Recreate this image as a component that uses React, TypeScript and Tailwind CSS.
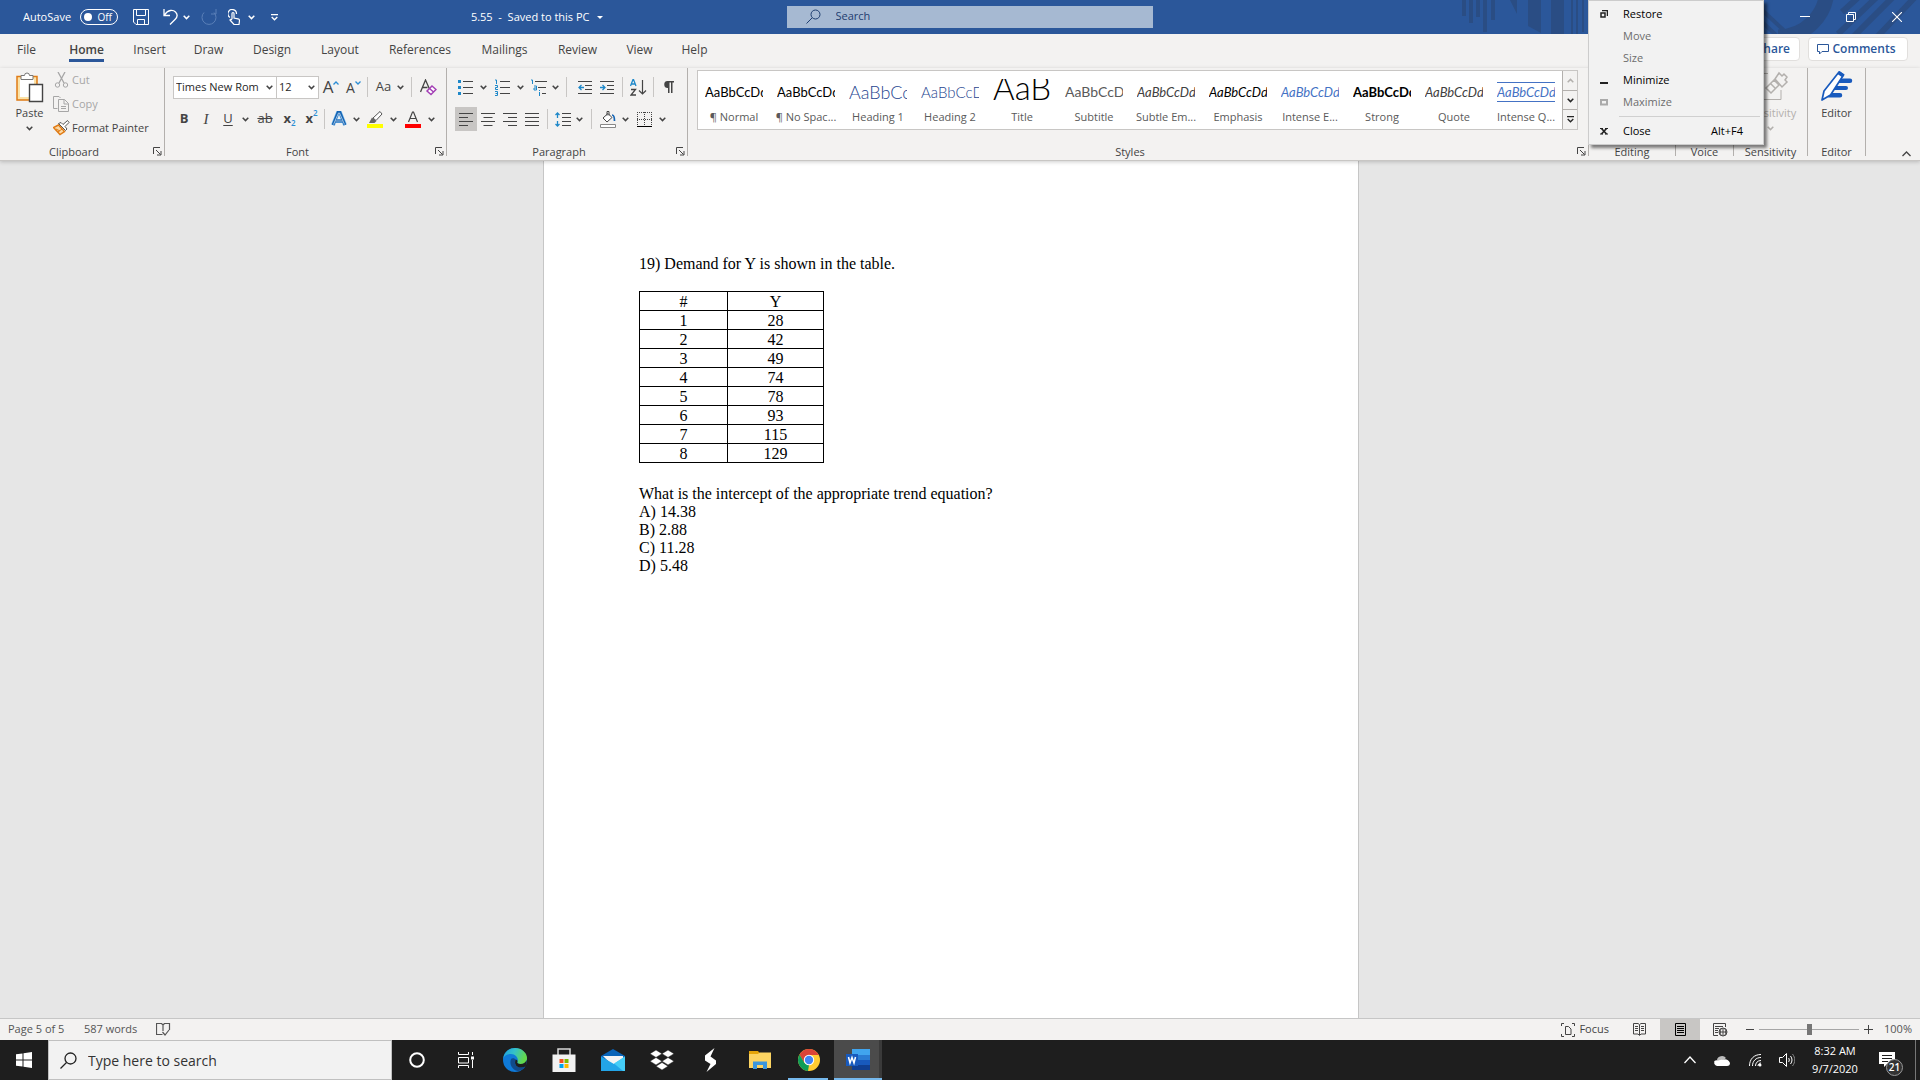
import type { ReactNode } from "react";

interface IconProps {
  w: number;
  h: number;
  children: ReactNode;
  className?: string;
}

function Icon({ w, h, children, className = "" }: IconProps) {
  return (
    <svg width={w} height={h} viewBox={`0 0 ${w} ${h}`} fill="none" stroke="currentColor" className={`shrink-0 ${className}`} aria-hidden="true">
      {children}
    </svg>
  );
}

function Chevron({ className = "" }: { className?: string }) {
  return (
    <Icon w={7} h={5} className={className}>
      <path d="M.7.8 3.5 3.6 6.3.8" strokeWidth="1.5" />
    </Icon>
  );
}

function Tool({ label, width, children, className = "" }: { label: string; width: string; children: ReactNode; className?: string }) {
  return (
    <button aria-label={label} className={`flex h-6 shrink-0 items-center justify-center ${width} ${className}`}>
      {children}
    </button>
  );
}

function Sep({ width }: { width: string }) {
  return (
    <span className={`flex shrink-0 justify-center ${width}`}>
      <span className="h-5 w-px bg-[#c8c6c4]" />
    </span>
  );
}

function Launcher({ label }: { label: string }) {
  return (
    <button aria-label={label} className="absolute right-[2px] bottom-0">
      <Icon w={9} h={9}>
        <path d="M.5 7V.5H7M3 3l4.5 4.5M8 4v4H4" />
      </Icon>
    </button>
  );
}

function Group({ label, width, launcher, children }: { label: string; width: string; launcher?: boolean; children?: ReactNode }) {
  return (
    <section aria-label={label} className={`flex h-[88px] flex-col border-r border-[#b3b0ad] ${width}`}>
      <div className="flex-1">{children}</div>
      <div className={`relative flex h-2 items-center justify-center text-[11px] leading-3 text-[#444] ${launcher ? "pr-4" : ""}`}>
        {label}
        {launcher && <Launcher label={`${label} settings`} />}
      </div>
    </section>
  );
}

const tabs = [
  { name: "File", width: "w-[53px]" },
  { name: "Home", width: "w-[67px]", active: true },
  { name: "Insert", width: "w-[59px]" },
  { name: "Draw", width: "w-[59px]" },
  { name: "Design", width: "w-[68px]" },
  { name: "Layout", width: "w-[68px]" },
  { name: "References", width: "w-[92px]" },
  { name: "Mailings", width: "w-[77px]" },
  { name: "Review", width: "w-[69px]" },
  { name: "View", width: "w-[55px]" },
  { name: "Help", width: "w-[55px]" },
];

const styles = [
  { name: "¶ Normal", sample: "AaBbCcDd", look: "text-[13px]/[20px] text-black" },
  { name: "¶ No Spac...", sample: "AaBbCcDd", look: "text-[13px]/[20px] text-black" },
  { name: "Heading 1", sample: "AaBbCcD", look: "text-[18px]/[20px] font-light text-[#1f4690]" },
  { name: "Heading 2", sample: "AaBbCcD", look: "text-[15px]/[20px] font-light text-[#1f4690]" },
  { name: "Title", sample: "AaB", look: "text-[33px]/[30px] font-light text-black" },
  { name: "Subtitle", sample: "AaBbCcD", look: "text-[14px]/[20px] text-[#5a5a5a]" },
  { name: "Subtle Em...", sample: "AaBbCcDd", look: "text-[13px]/[20px] italic text-[#404040]" },
  { name: "Emphasis", sample: "AaBbCcDd", look: "text-[13px]/[20px] italic text-black" },
  { name: "Intense E...", sample: "AaBbCcDd", look: "text-[13px]/[20px] italic text-[#4472c4]" },
  { name: "Strong", sample: "AaBbCcDd", look: "text-[13px]/[20px] font-bold text-black" },
  { name: "Quote", sample: "AaBbCcDd", look: "text-[13px]/[20px] italic text-[#404040]" },
  { name: "Intense Q...", sample: "AaBbCcDd", look: "text-[13px]/[18px] italic text-[#4472c4] border-y border-[#4472c4]" },
];

const demand = [28, 42, 49, 74, 78, 93, 115, 129];

function TitleBar() {
  return (
    <header className="relative flex h-[34px] items-center bg-[#2b579a] text-white">
      <svg width="460" height="34" viewBox="0 0 460 34" className="absolute top-0 right-0" aria-hidden="true">
        <g fill="#2a4d84">
          <path d="M2 0h4v16H2zM9 0h4v23H9zM16 0h4v17h-4zM23 0h4v32h-4zM31 0h4v20h-4zM50 0h7v14zM68 0h13v33l-13-7zM91 0h13v34H91zM111 0h2v34h-2zM116 0h2v34h-2zM122 0h2v32h-2z" />
        </g>
        <g fill="none" stroke="#2a4d84">
          <path d="M367-12c0 27-22 49-49 49" strokeWidth="15" />
          <path d="m302 10 28 26M302 22l14 13" strokeWidth="4" />
          <path d="m402-6-20 18M420-6l-42 40M436-6l-42 42M458-6l-40 42" strokeWidth="6" />
        </g>
      </svg>
      <div className="relative flex flex-1 items-center pl-[23px]">
        <span className="w-[57px] text-[11px]">AutoSave</span>
        <button role="switch" aria-checked="false" aria-label="AutoSave" className="flex h-4 w-[38px] items-center justify-between rounded-full border border-white px-[3px] pr-[5px] text-[10px]">
          <span className="h-2 w-2 rounded-full bg-white" />
          Off
        </button>
        <button aria-label="Save" className="ml-[15px]">
          <Icon w={16} h={16}><path d="M.5.5h15v15H3l-2.500-2.500zM3.500.500v6h9v-6M4.500 15.500v-5h7v5" /></Icon>
        </button>
        <button aria-label="Undo" className="ml-[14px]">
          <Icon w={15} h={16}><path d="M1 0v6.500h6M1.500 6C5 .500 10 .500 12.500 3s1.500 5.500-.500 7.500L7 15.500" strokeWidth="1.300" /></Icon>
        </button>
        <button aria-label="Undo options" className="ml-[5px]"><Chevron /></button>
        <button aria-label="Repeat" className="ml-[11px] text-[#5b80b8]">
          <Icon w={16} h={16}><path d="M1 0v5h5M3 3.500a7 7 0 1 0 10 0" transform="translate(16 0) scale(-1 1)" /></Icon>
        </button>
        <button aria-label="Touch/Mouse mode" className="ml-[11px]">
          <Icon w={12} h={16}><path d="M2 8.500A4.300 4.300 0 1 1 8.500 5M4 10V4.500a1 1 0 0 1 2 0V9l4 .800c1 .300 1.500.700 1.500 1.700L11 15.500H6L2 11c.300-1 1.300-1 2 0" strokeWidth="1.200" /></Icon>
        </button>
        <button aria-label="Touch options" className="ml-2"><Chevron /></button>
        <button aria-label="Customize Quick Access Toolbar" className="ml-4">
          <Icon w={7} h={7}><path d="M0 .500h7M.700 3 3.500 5.800 6.300 3" strokeWidth="1.300" /></Icon>
        </button>
        <button className="mr-[170px] ml-auto flex items-center gap-[7px] text-[11px] whitespace-pre">
          5.55  -  Saved to this PC
          <Icon w={6} h={3}><path d="M0 0h6L3 3z" fill="currentColor" stroke="none" /></Icon>
        </button>
      </div>
      <label className="relative ml-[14px] mb-px flex h-[22px] w-[366px] items-center bg-[#a6b9d2] pl-[19px] text-[#1f3e70]">
        <Icon w={15} h={15}><circle cx="9.500" cy="5.500" r="4.500" /><path d="M6.200 8.800.500 14.500" /></Icon>
        <input aria-label="Search" placeholder="Search" className="ml-[15px] flex-1 bg-transparent text-[11px] outline-none placeholder:text-[#1f3e70]" />
      </label>
      <div className="relative flex flex-1 items-center justify-end gap-9 pr-[18px]">
        <button aria-label="Ribbon display options"><Icon w={10} h={10}><path d="M.500.500h9v9h-9z" /></Icon></button>
        <button aria-label="Minimize"><Icon w={10} h={10}><path d="M0 4.500h10" /></Icon></button>
        <button aria-label="Restore down"><Icon w={10} h={10}><path d="M.500 2.500h7v7h-7zM2.500 2.500v-2h7v7h-2" /></Icon></button>
        <button aria-label="Close window"><Icon w={10} h={10}><path d="m0 0 10 10M10 0 0 10" strokeWidth="1.100" /></Icon></button>
      </div>
    </header>
  );
}

function TabBar() {
  return (
    <div className="flex h-[34px] items-start justify-between">
      <nav className="flex">
        {tabs.map((t) => (
          <button key={t.name} className={`flex justify-center text-[12px] text-[#444] ${t.width}`}>
            <span className={t.active ? "h-7 border-b-3 border-[#2b579a] pt-[7px] leading-[18px] font-semibold" : "h-7 pt-[7px] leading-[18px]"}>{t.name}</span>
          </button>
        ))}
      </nav>
      <div className="mt-[3px] flex gap-2 pr-3 text-[12px] font-semibold text-[#2b579a]">
        <button className="flex h-6 w-[76px] items-center justify-end gap-1 rounded-sm border border-[#e1dfdd] bg-white pr-[9px]">
          <Icon w={13} h={13}><path d="M5 4.500H.500v8h9V9M5 9c.500-4 3-5 7-5M9 1l3 3-3 3" /></Icon>
          Share
        </button>
        <button className="flex h-6 w-[100px] items-center justify-center gap-1 rounded-sm border border-[#e1dfdd] bg-white pr-1">
          <Icon w={12} h={11}><path d="M.500.500h11v7H5l-2.500 2.500V7.500h-2z" /></Icon>
          Comments
        </button>
      </div>
    </div>
  );
}

function Clipboard() {
  return (
    <Group label="Clipboard" width="w-[165px] shrink-0" launcher>
      <div className="flex">
        <button className="flex w-[53px] flex-col items-center pt-1 pl-[6px] text-[11px] text-[#444]">
          <Icon w={28} h={31}>
            <path d="M1 4.500h20V28H1z" fill="#fbe3a8" stroke="#e07b15" strokeWidth="1.500" />
            <path d="M4 7h14v18H4z" fill="#fff" stroke="none" />
            <path d="M5 7.500v-4h3.500a2.500 2.500 0 0 1 5 0H17v4z" fill="#fff" stroke="#777" />
            <path d="M13.500 12.500h13v17h-13z" fill="#fff" stroke="#444" strokeWidth="1.400" />
          </Icon>
          <span className="mt-[3px] leading-[14px]">Paste</span>
          <Chevron className="mt-[6px]" />
        </button>
        <div className="flex flex-col text-[11px]">
          <button disabled className="flex h-6 items-center gap-0.5 text-[#a6a6a6]">
            <Icon w={17} h={16}><path d="m5 0 6 11M12 0 6 11" strokeWidth="1.300" /><circle cx="4.500" cy="13" r="2.200" /><circle cx="12.500" cy="13" r="2.200" /></Icon>
            Cut
          </button>
          <button disabled className="flex h-6 items-center gap-0.5 text-[#a6a6a6]">
            <Icon w={17} h={16}><path d="M4.500 12.500h-4V.500H6L7.500 2M5.500 3.500h6l4 4v8h-10zM11 3.500v4.500h4.500M8 10.500h5M8 12.500h5" /></Icon>
            Copy
          </button>
          <button className="flex h-6 items-center gap-0.5 text-[#444]">
            <Icon w={17} h={16}>
              <path d="m5.500 5-5 2.500L7 14.500l4.500-3z" fill="#fbd9a5" stroke="#e07b15" strokeWidth="1.500" />
              <path d="m3 9 4 2M5 12l4-3" stroke="#e07b15" />
              <path d="m5.500 3.500 7 7 1.500-1.500-2-2.500 4-4-1.500-2-4.500 4L8 2.500z" fill="#fff" stroke="#555" />
            </Icon>
            Format Painter
          </button>
        </div>
      </div>
    </Group>
  );
}

function FontGroup() {
  return (
    <Group label="Font" width="w-[282px] shrink-0" launcher>
      <div className="flex items-center pt-[7px] pl-2 text-[#444]">
        <label className="relative flex h-[23px] w-[104px] items-center border border-[#c8c6c4] bg-white">
          <select aria-label="Font name" className="w-full appearance-none pl-[2px] text-[11px] text-[#262626] outline-none">
            <option>Times New Rom</option>
          </select>
          <Chevron className="absolute right-[3px]" />
        </label>
        <label className="relative -ml-px flex h-[23px] w-[43px] items-center border border-[#c8c6c4] bg-white">
          <select aria-label="Font size" className="w-full appearance-none pl-[2px] text-[11px] text-[#262626] outline-none">
            <option>12</option>
          </select>
          <Chevron className="absolute right-[3px]" />
        </label>
        <Tool label="Increase font size" width="w-6" className="text-[17px]">
          A<Icon w={6} h={4} className="mb-2 text-[#2a8dd4]"><path d="M.500 3.500 3 1l2.500 2.500" strokeWidth="1.300" /></Icon>
        </Tool>
        <Tool label="Decrease font size" width="w-[21px]" className="text-[14px]">
          A<Icon w={6} h={4} className="mb-2 text-[#2a8dd4]"><path d="M.500.500 3 3 5.500.500" strokeWidth="1.300" /></Icon>
        </Tool>
        <Sep width="w-[6px]" />
        <Tool label="Change case" width="w-[27px]" className="text-[13px]">Aa</Tool>
        <Tool label="Change case options" width="w-[6px]"><Chevron /></Tool>
        <Sep width="w-4" />
        <Tool label="Clear formatting" width="w-[18px]">
          <Icon w={17} h={17}>
            <path d="M.500 13 5.500 1l4 9M2.500 8.500h5" strokeWidth="1.300" />
            <path d="m7 12 5-5 4 3.500-5 5zM9.500 9.500l4 3.500" stroke="#a33fb5" strokeWidth="1.500" fill="#fff" />
          </Icon>
        </Tool>
      </div>
      <div className="flex items-center pt-2 pl-2 text-[13px] text-[#444]">
        <Tool label="Bold" width="w-[22px]" className="font-bold">B</Tool>
        <Tool label="Italic" width="w-[22px]" className="italic"><span className="font-['Liberation_Serif',serif] text-[15px]">I</span></Tool>
        <Tool label="Underline" width="w-[22px]" className="underline underline-offset-2">U</Tool>
        <Tool label="Underline options" width="w-[13px]"><Chevron /></Tool>
        <Tool label="Strikethrough" width="w-[26px]" className="line-through">ab</Tool>
        <Tool label="Subscript" width="w-[23px]" className="font-bold">x<sub className="pt-1 text-[8px] font-semibold text-[#2a8dd4]">2</sub></Tool>
        <Tool label="Superscript" width="w-[21px]" className="font-bold">x<sup className="pb-1 text-[8px] font-semibold text-[#2a8dd4]">2</sup></Tool>
        <Sep width="w-[5px]" />
        <Tool label="Text effects" width="w-6">
          <Icon w={16} h={16}>
            <path d="m2 14 5-12.500h2L14 14M4.500 10h7" stroke="#8cc4ee" strokeWidth="4" />
            <path d="m2 14 5-12.500h2L14 14M4.500 10h7" stroke="#1464b4" strokeWidth="2.800" />
            <path d="m2.500 13.500 5-11.500h1l5 11.500M4.500 10h7" stroke="#fff" strokeWidth=".600" />
          </Icon>
        </Tool>
        <Tool label="Text effects options" width="w-[10px]"><Chevron /></Tool>
        <Tool label="Highlight" width="w-[28px]">
          <Icon w={16} h={17}>
            <path d="M0 13h16v4H0z" fill="#ff0" stroke="none" />
            <path d="m6 7 7-6.500L15 3 9 9.500z" fill="#fff" stroke="#555" />
            <path d="M5 6.500 9.500 10l-2 2H2z" fill="#666" stroke="none" />
          </Icon>
        </Tool>
        <Tool label="Highlight options" width="w-[9px]"><Chevron /></Tool>
        <Tool label="Font color" width="w-[29px]">
          <Icon w={16} h={17}>
            <path d="M0 13h16v4H0z" fill="red" stroke="none" />
            <path d="m3.500 11 4-10h1l4 10M5 7.500h6" strokeWidth="1.200" />
          </Icon>
        </Tool>
        <Tool label="Font color options" width="w-2"><Chevron /></Tool>
      </div>
    </Group>
  );
}

function Paragraph() {
  return (
    <Group label="Paragraph" width="w-[241px] shrink-0" launcher>
      <div className="flex items-center pt-[7px] pl-2 text-[#444]">
        <Tool label="Bullets" width="w-[21px]">
          <Icon w={15} h={15}><path d="M5 1.500h10M5 7.500h10M5 13.500h10" /><path d="M0 0h3v3H0zM0 6h3v3H0zM0 12h3v3H0z" fill="#1e88c9" stroke="none" /></Icon>
        </Tool>
        <Tool label="Bullet options" width="w-[15px]"><Chevron /></Tool>
        <Tool label="Numbering" width="w-[23px]">
          <Icon w={15} h={17}><path d="M5 2.500h10M5 8.500h10M5 14.500h10" /><path d="M0 1h1.500v4M0 6.500h2.500v2H.500v2H3M0 12.500h2.500v4H0M.500 14.500h2" stroke="#1e88c9" /></Icon>
        </Tool>
        <Tool label="Numbering options" width="w-3"><Chevron /></Tool>
        <Tool label="Multilevel list" width="w-[26px]">
          <Icon w={16} h={17}><path d="M4 2.500h12M7 8.500h8M11 14.500h4" /><path d="M0 1h1.500v4M3 7h2.500v4H3V9h2M8.500 11v1M8.500 13v4" stroke="#1e88c9" /></Icon>
        </Tool>
        <Tool label="Multilevel options" width="w-[7px]"><Chevron /></Tool>
        <Sep width="w-[15px]" />
        <Tool label="Decrease indent" width="w-[21px]">
          <Icon w={14} h={13}><path d="M0 .500h14M7 4.500h7M7 8.500h7M0 12.500h14" /><path d="M6 6.500H.800M3.500 4 1 6.500 3.500 9" stroke="#1e88c9" strokeWidth="1.300" /></Icon>
        </Tool>
        <Tool label="Increase indent" width="w-[23px]">
          <Icon w={14} h={13}><path d="M0 .500h14M7 4.500h7M7 8.500h7M0 12.500h14" /><path d="M0 6.500h5.200M2.500 4 5 6.500 2.500 9" stroke="#1e88c9" strokeWidth="1.300" /></Icon>
        </Tool>
        <Sep width="w-2" />
        <Tool label="Sort" width="w-6">
          <Icon w={17} h={17}><path d="m.500 7 2.500-6.500h.500L6 7M1.500 5h3.500" stroke="#1e88c9" strokeWidth="1.300" /><path d="M1 10.500h4.500L1 16h5" strokeWidth="1.300" /><path d="M12.500 1v14M9 11.500l3.500 3.500 3.500-3.500" strokeWidth="1.200" /></Icon>
        </Tool>
        <Sep width="w-[6px]" />
        <Tool label="Show paragraph marks" width="w-6">
          <Icon w={11} h={12}><path d="M4.500 0H11v1.500H9.500V12H8V1.500H6.500V12H5V7a3.500 3.500 0 0 1-.500-7z" fill="currentColor" stroke="none" /></Icon>
        </Tool>
      </div>
      <div className="flex items-center pt-2 pl-2 text-[#444]">
        <Tool label="Align left" width="w-[22px]" className="bg-[#c8c6c4]"><Icon w={14} h={13}><path d="M0 .500h14M0 4.500h9M0 8.500h14M0 12.500h9" /></Icon></Tool>
        <Tool label="Center" width="w-[22px]"><Icon w={14} h={13}><path d="M0 .500h14M2.500 4.500h9M0 8.500h14M2.500 12.500h9" /></Icon></Tool>
        <Tool label="Align right" width="w-[22px]"><Icon w={14} h={13}><path d="M0 .500h14M5 4.500h9M0 8.500h14M5 12.500h9" /></Icon></Tool>
        <Tool label="Justify" width="w-[22px]"><Icon w={14} h={13}><path d="M0 .500h14M0 4.500h14M0 8.500h14M0 12.500h14" /></Icon></Tool>
        <Sep width="w-[9px]" />
        <Tool label="Line spacing" width="w-[22px]">
          <Icon w={16} h={15}><path d="M7 1.500h9M7 5.500h9M7 9.500h9M7 13.500h9" /><path d="M2.500 1v5M.500 3l2-2 2 2M2.500 9v5M.500 12l2 2 2-2" stroke="#1e88c9" strokeWidth="1.300" /></Icon>
        </Tool>
        <Tool label="Line spacing options" width="w-[10px]"><Chevron /></Tool>
        <Sep width="w-[15px]" />
        <Tool label="Shading" width="w-[18px]">
          <Icon w={16} h={17}><path d="M.500 13.500h15v3H.500z" stroke="#888" fill="#fff" /><path d="m8 2.500 4 4L7 11 3 7zM7 4.500v-4h2v4" fill="#fff" /><path d="M12 4c2 0 2.500 3 2.500 6" stroke="#1464b4" strokeWidth="1.700" /></Icon>
        </Tool>
        <Tool label="Shading options" width="w-4"><Chevron /></Tool>
        <Tool label="Borders" width="w-[23px]">
          <Icon w={15} h={15}><path d="M.500 0v14M14.500 0v14M7.500 0v14M0 .500h15M0 7.500h15" strokeDasharray="1 1" /><path d="M0 14.500h15" stroke="#000" /></Icon>
        </Tool>
        <Tool label="Border options" width="w-3"><Chevron /></Tool>
      </div>
    </Group>
  );
}

function StylesGroup() {
  return (
    <Group label="Styles" width="min-w-0 flex-1" launcher>
      <div className="mr-[10px] ml-[9px] mt-[2px] flex h-[60px] border border-[#c8c6c4] bg-white">
        <div className="flex min-w-0 flex-1 overflow-hidden">
          {styles.map((s) => (
            <button key={s.name} className="flex w-[72px] shrink-0 flex-col items-center">
              <span className="mt-2 flex h-[23px] w-[58px] items-end overflow-hidden">
                <span className={`w-full font-[Lato,sans-serif] whitespace-nowrap ${s.look}`}>{s.sample}</span>
              </span>
              <span className="mt-[7px] text-[11px] leading-4 whitespace-nowrap text-[#5a5a5a]">{s.name}</span>
            </button>
          ))}
        </div>
        <div className="flex w-[15px] flex-col divide-y divide-[#b3b0ad] border-l border-[#b3b0ad] bg-[#f3f2f1] text-[#262626]">
          <button aria-label="Previous styles" className="flex flex-1 items-center justify-center"><Chevron className="rotate-180 text-[#b3b0ad]" /></button>
          <button aria-label="Next styles" className="flex flex-1 items-center justify-center"><Chevron /></button>
          <button aria-label="More styles" className="flex flex-1 items-center justify-center"><Icon w={7} h={7}><path d="M0 .500h7M.700 3 3.500 5.800 6.300 3" strokeWidth="1.300" /></Icon></button>
        </div>
      </div>
    </Group>
  );
}

function Ribbon() {
  return (
    <div className="relative z-10 flex h-[93px] border-b border-[#c8c6c4] shadow-[0_1px_4px_rgba(0,0,0,0.2)] bg-[#f3f2f1]">
      <Clipboard />
      <FontGroup />
      <Paragraph />
      <StylesGroup />
      <Group label="Editing" width="w-[87px] shrink-0" />
      <Group label="Voice" width="w-[58px] shrink-0" />
      <Group label="Sensitivity" width="w-[74px] shrink-0">
        <button disabled className="flex w-full flex-col items-center pt-[2px] text-[11px] text-[#b3b0ad]">
          <Icon w={36} h={32}>
            <path d="M1 3.500h14M1 3.500V29.500h27V20" />
            <path d="m13 18 8-8 5 5-8 8zM18 14l4 4M22 9l4-6 3 3 2-2 3 3-2 3 2 2-5 5z" strokeWidth="1.500" />
          </Icon>
          <span className="mt-1 leading-[14px]">Sensitivity</span>
          <Chevron className="mt-[6px]" />
        </button>
      </Group>
      <Group label="Editor" width="w-[58px] shrink-0">
        <button className="flex w-full flex-col items-center pt-[2px] text-[11px] text-[#444]">
          <Icon w={32} h={32}>
            <path d="M17 8.500h12a2 2 0 0 1 0 4.500H14zM14 16h11a2 2 0 0 1 0 4H11zM11 23h8a2 2 0 0 1 0 4.500H7z" fill="#185abd" stroke="none" />
            <path d="m18 2 4.500 3-13 20L1 30l2-9z" fill="#fff" stroke="#185abd" strokeWidth="1.700" strokeLinejoin="round" />
            <path d="m16.500 4 2-3 5 3.500-2 3z" fill="#185abd" stroke="none" />
          </Icon>
          <span className="mt-1 leading-[14px]">Editor</span>
        </button>
      </Group>
      <div className="flex w-[54px] shrink-0 items-end justify-end pr-[9px] pb-[3px] text-[#444]">
        <button aria-label="Collapse the ribbon"><Icon w={9} h={6}><path d="m.500 5 4-4 4 4" strokeWidth="1.300" /></Icon></button>
      </div>
    </div>
  );
}

function SystemMenu() {
  const row = "flex h-[22px] w-full items-center text-left";
  return (
    <div role="menu" className="absolute top-0 right-[156px] z-20 w-[176px] border border-[#ccc] bg-[#f2f2f2] px-[3px] py-[2px] text-[11px] text-black shadow-[3px_3px_3px_rgba(0,0,0,0.5)]">
      <button role="menuitem" className={row}>
        <span className="w-[31px] pl-2"><Icon w={8} h={8}><path d="M2 .500h5.500V6M1 3h4v4H1z" stroke="#222" strokeWidth="1.500" /></Icon></span>Restore
      </button>
      <button role="menuitem" disabled className={`${row} pl-[31px] text-[#6d6d6d]`}>Move</button>
      <button role="menuitem" disabled className={`${row} pl-[31px] text-[#6d6d6d]`}>Size</button>
      <button role="menuitem" className={row}>
        <span className="w-[31px] pl-2"><Icon w={8} h={8}><path d="M0 7h8" stroke="#222" strokeWidth="2" /></Icon></span>Minimize
      </button>
      <button role="menuitem" disabled className={`${row} text-[#6d6d6d]`}>
        <span className="w-[31px] pl-2"><Icon w={8} h={8}><path d="M1 2h6v4.500H1z" stroke="#aaa" strokeWidth="2" /></Icon></span>Maximize
      </button>
      <hr className="mt-[3px] mb-[3px] ml-[27px] border-[#d0d0d0]" />
      <button role="menuitem" className={row}>
        <span className="w-[31px] pl-2"><Icon w={8} h={8}><path d="M0 1.500h3M5 1.500h3M0 7h3M5 7h3" stroke="#222" /><path d="m1.500 1.500 5 5.500M6.500 1.500 1.500 7" stroke="#222" strokeWidth="1.700" /></Icon></span>Close
        <span className="mr-[17px] ml-auto">Alt+F4</span>
      </button>
    </div>
  );
}

function Document() {
  return (
    <main className="flex min-h-0 flex-1 justify-center overflow-hidden bg-[#e6e6e6] pr-[18px]">
      <article className="w-[816px] border-x border-[#c6c6c6] bg-white px-[95px] pt-[94px] font-['Liberation_Serif','Times_New_Roman',serif] text-[16px] leading-[18px] text-black">
        <p>19) Demand for Y is shown in the table.</p>
        <table className="mt-[18px] border-collapse text-center leading-4">
          <thead>
            <tr>
              <th className="w-[88px] border border-black p-0 pt-[2px] font-normal">#</th>
              <th className="w-[96px] border border-black p-0 pt-[2px] font-normal">Y</th>
            </tr>
          </thead>
          <tbody>
            {demand.map((y, i) => (
              <tr key={i}>
                <td className="border border-black p-0 pt-[2px]">{i + 1}</td>
                <td className="border border-black p-0 pt-[2px]">{y}</td>
              </tr>
            ))}
          </tbody>
        </table>
        <p className="mt-[21px] leading-[19px]">What is the intercept of the appropriate trend equation?</p>
        <p>A) 14.38</p>
        <p>B) 2.88</p>
        <p>C) 11.28</p>
        <p>D) 5.48</p>
      </article>
    </main>
  );
}

function StatusBar() {
  return (
    <footer className="flex h-[22px] shrink-0 items-center border-t border-[#c6c6c6] bg-[#f3f2f1] pl-2 text-[11px] text-[#555]">
      <span className="w-[76px]">Page 5 of 5</span>
      <span className="w-[72px]">587 words</span>
      <button aria-label="Proofing"><Icon w={15} h={13}><path d="M6.500 11.500H.500V.500h5L7 2l1.500-1.500h5V7M7 2v6M6.500 9l2.500 3 4-5" strokeWidth="1.200" /></Icon></button>
      <div className="ml-auto flex h-full items-center text-[#444]">
        <button className="mr-6 flex items-center gap-1">
          <Icon w={14} h={14}><path d="M3 .500H.500V3M11 .500h2.500V3M3 13.500H.500V11M11 13.500h2.500V11M4.500 3.500h3L10 6v5.500H4.500z" /></Icon>
          Focus
        </button>
        <button aria-label="Read mode"><Icon w={13} h={13}><path d="M.500.500h4.500l1.500 1 1.500-1h4.500v10.500H8l-1.500 1.500L5 11H.500zM6.500 2v10M2 3.500h3M2 5.500h3M2 7.500h3M8 3.500h3M8 5.500h3M8 7.500h3" /></Icon></button>
        <button aria-label="Print layout" className="ml-[14px] flex h-full w-10 items-center justify-center bg-[#c8c6c4]">
          <Icon w={11} h={13} className="text-black"><path d="M.500.500h10v12H.500zM2 3.500h7M2 5.500h7M2 7.500h7M2 9.500h7" /></Icon>
        </button>
        <button aria-label="Web layout" className="ml-[13px]">
          <Icon w={15} h={14}><path d="M5 12.500H.500V.500h12V4M2 3.500h8M2 5.500h4M2 7.500h3M2 9.500h3" /><circle cx="10" cy="9" r="4" /><path d="M6 9h8M10 5v8M8 6c-1 2-1 4 0 6M12 6c1 2 1 4 0 6" /></Icon>
        </button>
        <button aria-label="Zoom out" className="ml-[18px]"><Icon w={8} h={8}><path d="M0 3.500h8" /></Icon></button>
        <input
          type="range"
          aria-label="Zoom"
          defaultValue={50}
          className="ml-[5px] h-[11px] w-[100px] appearance-none bg-[linear-gradient(#a6a6a6,#a6a6a6)] bg-[length:100%_1px] bg-center bg-no-repeat [&::-webkit-slider-thumb]:h-[11px] [&::-webkit-slider-thumb]:w-[5px] [&::-webkit-slider-thumb]:appearance-none [&::-webkit-slider-thumb]:bg-[#767676]"
        />
        <button aria-label="Zoom in" className="ml-[5px]"><Icon w={9} h={9}><path d="M0 4.500h9M4.500 0v9" /></Icon></button>
        <span className="mr-2 w-[39px] text-right text-[#555]">100%</span>
      </div>
    </footer>
  );
}

const apps: { name: string; art: ReactNode }[] = [
  { name: "Cortana", art: <Icon w={16} h={16}><circle cx="8" cy="8" r="6.800" strokeWidth="2" /></Icon> },
  { name: "Task View", art: <Icon w={16} h={16}><path d="M.500 0v2.500h10V0M.500 16v-2.500h10V16M.500 5.500h10v5.500H.500zM14.500 0v3M14.500 8v8" /><path d="M13 4.500h3v3h-3z" fill="#fff" stroke="none" /></Icon> },
  {
    name: "Microsoft Edge",
    art: (
      <Icon w={24} h={24}>
        <defs>
          <linearGradient id="edgeTop" x1="0" y1="0" x2="1" y2="0.300"><stop offset="0" stopColor="#1b9de2" /><stop offset="0.500" stopColor="#35c1c9" /><stop offset="1" stopColor="#63d94a" /></linearGradient>
        </defs>
        <g stroke="none">
          <circle cx="12" cy="12" r="12" fill="#0f7ad8" />
          <path d="M0 11C1 4 6 0 12 0c7 0 12 5 12 10 0 4-3 6-6 6-3 0-4-1-3.500-2.500C16 11 13 6 8 6c-4 0-7 2-8 5z" fill="url(#edgeTop)" />
          <path d="M8 11c-2 5 1 11 7 12 3-.500 6-2 7.500-4.500-4 2-8 1-9.500-1-1.500-1.500-1.500-4 0-5.500-1-2-4-2-5-1z" fill="#114a8b" />
          <path d="M14.500 13.500c-1 1.500.500 2.500 3 2.500 3 0 5-1.500 6-4 .500 3 0 5-1 6.500-4 2-8 1-9.500-1s-1-5 0-6c1 .500 1.500 1 1.500 2z" fill="#1e1e1e" />
        </g>
      </Icon>
    ),
  },
  {
    name: "Microsoft Store",
    art: (
      <Icon w={24} h={24}>
        <path d="M6 7V1h12v6" stroke="#d8d8d8" strokeWidth="1.500" />
        <path d="M.500 6.500h23V24H.500z" fill="#f2f2f2" stroke="none" />
        <g stroke="none"><path d="M7.500 11h4v4h-4z" fill="#f25022" /><path d="M12.500 11h4v4h-4z" fill="#7fba00" /><path d="M7.500 16h4v4h-4z" fill="#00a4ef" /><path d="M12.500 16h4v4h-4z" fill="#ffb900" /></g>
      </Icon>
    ),
  },
  {
    name: "Mail",
    art: (
      <Icon w={24} h={22}>
        <g stroke="none"><path d="M0 7 12 0l12 7v4H0z" fill="#0a64b8" /><path d="M2 7h20v6l-10 4z" fill="#f4f4f4" /><path d="M0 7.500 13 15l11-7.500V22H0z" fill="#23a5e8" /><path d="m24 7.500-11 7L22 22h2z" fill="#45cdf7" /></g>
      </Icon>
    ),
  },
  { name: "Dropbox", art: <Icon w={24} h={20}><path d="m6 0 6 3.700-6 3.700L0 3.700zM18 0l6 3.700-6 3.700-6-3.700zM6 7.500l6 3.700-6 3.700-6-3.700zM18 7.500l6 3.700-6 3.700-6-3.700zM12 12.500l6 3.700-6 3.800-6-3.800z" fill="#fff" stroke="#1e1e1e" strokeWidth=".500" /></Icon> },
  { name: "Stream", art: <Icon w={13} h={24}><path d="M10.500 0 1 7.500v5L6.500 16 2.500 24 12 16v-3.500L6.500 8.500z" fill="#fff" stroke="none" /></Icon> },
  {
    name: "File Explorer",
    art: (
      <Icon w={22} h={18}>
        <g stroke="none"><path d="M0 0h9l1.500 2H22v5H0z" fill="#e5a50a" /><path d="M0 3h9l1.500-1.500H22V17H0z" fill="#fcd462" /><path d="M4 10.500h14V18h-4v-4H8v4H4z" fill="#3a96dd" /></g>
      </Icon>
    ),
  },
  {
    name: "Google Chrome",
    art: (
      <Icon w={22} h={22}>
        <g stroke="none"><circle cx="11" cy="11" r="11" fill="#fc3" /><path d="M1.500 5.500a11 11 0 0 1 19 0V6H11l-5 7.500z" fill="#db4437" /><path d="M1.500 5.500 6.500 14l4.500 2-1 6A11 11 0 0 1 1.500 5.500z" fill="#0f9d58" /><circle cx="11" cy="11" r="5.200" fill="#fff" /><circle cx="11" cy="11" r="4.200" fill="#4285f4" /></g>
      </Icon>
    ),
  },
  {
    name: "Word",
    art: (
      <Icon w={24} h={22}>
        <g stroke="none"><path d="M6 0h18v6H6z" fill="#41a5ee" /><path d="M6 6h18v5H6z" fill="#2b7cd3" /><path d="M6 11h18v5H6z" fill="#185abd" /><path d="M6 16h18v5H6z" fill="#103f91" /><path d="M0 5h12v12H0z" fill="#185abd" /></g>
        <path d="m2.500 8 1.500 6L6 8.500 8 14l1.500-6" stroke="#fff" strokeWidth="1.500" />
      </Icon>
    ),
  },
];

function Taskbar() {
  return (
    <div className="flex h-10 shrink-0 items-stretch bg-[#1e1e1e] text-white">
      <button aria-label="Start" className="flex w-12 items-center justify-center">
        <Icon w={16} h={16}><path d="m0 2.300 6.500-.900v6.100H0zM7.500 1.200 16 0v7.500H7.500zM0 8.500h6.500v6.100L0 13.700zM7.500 8.500H16V16l-8.500-1.200z" fill="#fff" stroke="none" /></Icon>
      </button>
      <label className="flex w-[344px] items-center border border-[#c0c0c0] bg-[#f2f2f2] pl-[11px] text-[#222]">
        <Icon w={17} h={17}><circle cx="10.500" cy="6.500" r="5.500" strokeWidth="1.300" /><path d="M6.500 10.500.500 16.500" strokeWidth="1.300" /></Icon>
        <input aria-label="Windows search" placeholder="Type here to search" className="ml-[11px] flex-1 bg-transparent text-[14px] outline-none placeholder:text-[#333]" />
      </label>
      <div className="flex">
        {apps.map((a) => (
          <button key={a.name} aria-label={a.name} className="relative flex w-[49px] items-center justify-center">
            {a.name === "Word" && <span className="absolute inset-y-0 left-px w-12 border-r-3 border-[#3a3a3a] bg-[#4b4b4b]" />}
            {a.name === "Word" && <span className="absolute bottom-0 left-px h-[2px] w-12 bg-[#76b9ed]" />}
            {a.name === "Google Chrome" && <span className="absolute bottom-0 left-1 h-[2px] w-10 bg-[#76b9ed]" />}
            <span className="relative">{a.art}</span>
          </button>
        ))}
      </div>
      <div className="ml-auto flex items-center">
        <button aria-label="Hidden icons" className="mr-[18px]"><Icon w={12} h={8}><path d="m.500 7 5.500-6 5.500 6" strokeWidth="1.300" /></Icon></button>
        <button aria-label="OneDrive" className="mr-[19px]">
          <Icon w={16} h={11}><g stroke="none"><path d="M3 5a5 4.500 0 0 1 9-2L6 8 0 7c0-1 1-2 3-2z" fill="#bbb" /><path d="M3 11a3 3 0 0 1-2-5c4 0 5-2 8-1 2-2 6 0 7 3 0 2-1 3-3 3z" fill="#fff" /></g></Icon>
        </button>
        <button aria-label="Network" className="mr-[17px]">
          <Icon w={13} h={13}><path d="M.500 12C.500 5 5 .500 12 .500M3.500 12c0-5 3.500-8.500 8.500-8.500M6.500 12c0-3 2-5.500 5.500-5.500M9 12c0-1.500 1-3 3-3" /><circle cx="11" cy="11" r="1.500" fill="#fff" stroke="none" /></Icon>
        </button>
        <button aria-label="Volume" className="mr-3">
          <Icon w={16} h={14}><path d="M.500 4.500h3l4-4v13l-4-4h-3zM9.500 5c1 1 1 3 0 4M11.500 3c2 2.500 2 5.500 0 8" /><path d="M13.500 1c3 4 3 8 0 12" stroke="#888" /></Icon>
        </button>
        <div className="w-[56px] text-center text-[11px] leading-[18px]">
          <div>8:32 AM</div>
          <div>9/7/2020</div>
        </div>
        <button aria-label="Notifications" className="relative ml-4 h-10 w-[36px]">
          <Icon w={17} h={15} className="absolute top-3 left-0"><path d="M0 0h16v12H8l-3 3v-3H0z" fill="#fff" stroke="none" /><path d="M3 3.500h10M3 6.500h10M3 9.500h6" stroke="#1e1e1e" /></Icon>
          <span className="absolute top-[19px] left-[7px] flex h-[17px] w-[17px] items-center justify-center rounded-full border border-[#999] bg-[#333] text-[10px] font-semibold">21</span>
        </button>
        <span className="mr-1 h-full w-px bg-[#777]" />
      </div>
    </div>
  );
}

export default function App() {
  return (
    <div className="relative flex h-screen flex-col overflow-hidden bg-[#f3f2f1] font-['Open_Sans','Noto_Sans',sans-serif]">
      <TitleBar />
      <TabBar />
      <Ribbon />
      <Document />
      <StatusBar />
      <Taskbar />
      <SystemMenu />
    </div>
  );
}
